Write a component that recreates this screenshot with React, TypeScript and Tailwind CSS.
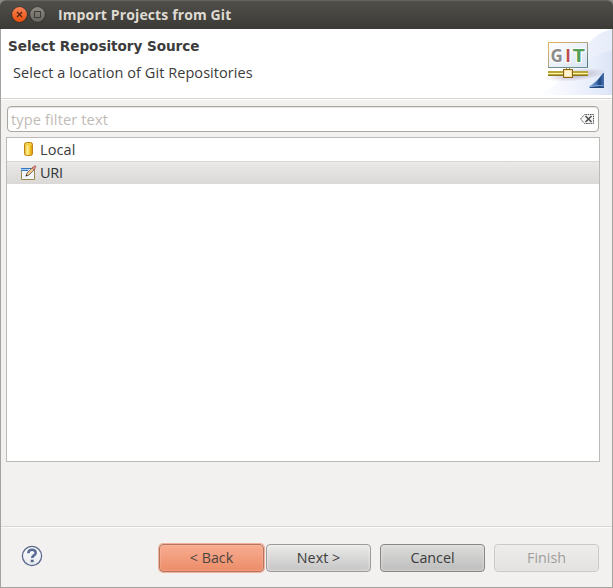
import React from "react";

function TitleBar() {
  return (
    <div className="bg-[#8b8b86]">
      <div className="flex h-[29px] items-center rounded-t-[6px] border-t border-[#66645e] bg-linear-to-b from-[#504f4a] to-[#3b3a36] pl-[11px]">
        <svg width="36" height="18" viewBox="0 0 36 18" className="shrink-0">
          <defs>
            <linearGradient id="close" x2="0" y2="1">
              <stop stopColor="#f98253" />
              <stop offset="1" stopColor="#e8500f" />
            </linearGradient>
            <linearGradient id="max" x2="0" y2="1">
              <stop stopColor="#8b8981" />
              <stop offset="1" stopColor="#66645e" />
            </linearGradient>
          </defs>
          <circle cx="8.5" cy="8.7" r="8.2" fill="#32312e" />
          <circle cx="8.5" cy="8.5" r="7.4" fill="url(#close)" />
          <path d="M6 6l5 5M11 6l-5 5" stroke="#4b2416" strokeWidth="1.2" />
          <circle cx="26.5" cy="8.7" r="8.2" fill="#32312e" />
          <circle cx="26.5" cy="8.5" r="7.4" fill="url(#max)" />
          <path d="M23.5 5.5h6v6h-6z" fill="none" stroke="#3c3b37" />
        </svg>
        <h1 className="ml-[11px] whitespace-nowrap font-['Open_Sans','Noto_Sans',sans-serif] text-[14px] leading-5 font-bold tracking-[0.12px] text-[#dfdbd2]">
          Import Projects from Git
        </h1>
      </div>
    </div>
  );
}

function GitBanner() {
  return (
    <svg width="75" height="66" viewBox="0 0 75 66" className="shrink-0 self-start">
      <defs>
        <linearGradient id="sky" x1="0" x2="1">
          <stop stopColor="#fff" />
          <stop offset=".55" stopColor="#f0f3fd" />
          <stop offset="1" stopColor="#e6ecf9" />
        </linearGradient>
        <linearGradient id="sky2" x1="0" x2="1">
          <stop offset=".1" stopColor="#fff" stopOpacity="0" />
          <stop offset="1" stopColor="#dbe4f7" />
        </linearGradient>
        <linearGradient id="frame" x1="0" x2="1" y2="1">
          <stop stopColor="#e8b15d" />
          <stop offset=".45" stopColor="#b4a882" />
          <stop offset="1" stopColor="#47707a" />
        </linearGradient>
        <linearGradient id="screen" x1="0" x2="1" y2="1">
          <stop stopColor="#fff" />
          <stop offset="1" stopColor="#d7e4f2" />
        </linearGradient>
        <linearGradient id="tri" x1="0" x2="1" y1="0" y2="0">
          <stop stopColor="#a5c6ea" />
          <stop offset=".5" stopColor="#3f6dab" />
          <stop offset=".72" stopColor="#1f4683" />
          <stop offset="1" stopColor="#4a73af" />
        </linearGradient>
        <radialGradient id="shade">
          <stop stopColor="#9d93ac" stopOpacity=".7" />
          <stop offset="1" stopColor="#9d93ac" stopOpacity="0" />
        </radialGradient>
      </defs>
      <path d="M75 0C62 3 51 12 44 24S26 55 0 66h75z" fill="url(#sky)" />
      <path d="M75 22C58 24 49 33 39 47S17 63 0 66h75z" fill="url(#sky2)" />
      <ellipse cx="39" cy="46" rx="31" ry="6" fill="url(#shade)" transform="rotate(-6 39 46)" />
      <rect x="11.5" y="13.5" width="39" height="25" fill="url(#screen)" stroke="url(#frame)" />
      <path d="M11 38.5h40" stroke="#6f8f8f" />
      <g fontFamily="Open Sans, Noto Sans, sans-serif" fontWeight="700" fontSize="17" stroke="#fff" strokeWidth="2" paintOrder="stroke">
        <text x="13.6" y="32.5" fill="#8b8b8b">G</text>
        <text x="28.2" y="32.5" fill="#b84c52">I</text>
        <text x="35.4" y="32.5" textLength="12.5" lengthAdjust="spacingAndGlyphs" fill="#54a05b">T</text>
      </g>
      <path d="M29.5 39v3M32.5 39v3" stroke="#a08726" />
      <rect x="11" y="42" width="40" height="5" fill="#b9a53a" />
      <path d="M11 44.5h40" stroke="#fff7a0" />
      <path d="M11 46.5h40" stroke="#8d7620" />
      <rect x="26.5" y="40.5" width="9" height="8" fill="#f8dda0" stroke="#8a6716" />
      <path d="M28 42h6v5h-6z" fill="#fff3d0" />
      <path d="M67 44v15H52V57C57 55 61 51 66 44z" fill="url(#tri)" />
      <path d="M58 56.5h8" stroke="#7ba3d3" />
      <path d="M53 58.5h14" stroke="#24477d" />
    </svg>
  );
}

function Header() {
  return (
    <header className="flex h-[70px] justify-between border-b border-[#d6d4d1] bg-white">
      <div className="whitespace-nowrap pl-[7px] pt-2">
        <h2 className="font-['DejaVu_Sans','Open_Sans',sans-serif] text-[13.6px] leading-[18px] font-bold tracking-[-0.05px] text-[#3c3c3c]">
          Select Repository Source
        </h2>
        <p className="mt-2 pl-[5px] text-[14.5px] leading-5 tracking-[0.06px] text-[#3c3c3c]">
          Select a location of Git Repositories
        </p>
      </div>
      <GitBanner />
    </header>
  );
}

function ClearIcon() {
  return (
    <svg width="16" height="12" viewBox="0 0 16 12">
      <path d="M1.5 6L5.5 1.5h9v9h-9z" fill="#f5f5f3" stroke="#555" strokeDasharray="1.6 .7" />
      <path d="M6.5 3l6 6M12.5 3l-6 6" stroke="#4b4b4b" strokeWidth="1.5" />
    </svg>
  );
}

function CylinderIcon() {
  return (
    <svg width="16" height="16" viewBox="0 0 16 16">
      <defs>
        <linearGradient id="gold">
          <stop stopColor="#e0a410" />
          <stop offset=".35" stopColor="#fff3a0" />
          <stop offset=".65" stopColor="#f6cb30" />
          <stop offset="1" stopColor="#d29208" />
        </linearGradient>
      </defs>
      <path d="M4.5 2.5q0-2 2-2h4q2 0 2 2v9q0 2-2 2h-4q-2 0-2-2z" fill="url(#gold)" stroke="#c18615" />
      <ellipse cx="8.5" cy="2.5" rx="3.2" ry="1.2" fill="#f5cf45" />
    </svg>
  );
}

function EditIcon() {
  return (
    <svg width="17" height="16" viewBox="0 0 17 16">
      <path d="M1.5 3.5h13v11h-13z" fill="#f2f7fd" stroke="#9b8948" />
      <path d="M1 3.5h10M1 5.5h7" stroke="#3777bd" />
      <path d="M1 4.5h8" stroke="#a5cdf2" />
      <path d="M6 11L7 8l6-6 2 2-6 6z" fill="#f4c892" stroke="#655449" strokeWidth=".8" />
      <path d="M12 3l2-2q2-1 2 1l-2 3z" fill="#df8b7e" stroke="#9e5852" strokeWidth=".6" />
      <path d="M5.5 11.5l1-2 1.2 1z" fill="#202020" />
    </svg>
  );
}

function HelpIcon() {
  return (
    <svg width="22" height="22" viewBox="0 0 22 22">
      <defs>
        <linearGradient id="help" x2="0" y2="1">
          <stop stopColor="#fff" />
          <stop offset="1" stopColor="#e4e7ec" />
        </linearGradient>
      </defs>
      <circle cx="11" cy="11" r="9.6" fill="url(#help)" stroke="#526488" strokeWidth="1.2" />
      <path d="M7.3 8.3C7.4 3.6 15 3.8 14.7 8c-.2 2.5-3.5 2.4-3.5 5" fill="none" stroke="#586c96" strokeWidth="2.6" />
      <path d="M9.8 14.7h2.8v2.5H9.8z" fill="#526488" />
    </svg>
  );
}

const buttonBase =
  "flex h-[28px] w-[105px] items-center justify-center rounded-[4px] border text-[14.3px] whitespace-nowrap";

export default function App() {
  return (
    <main className="flex h-[588px] w-[613px] flex-col overflow-hidden bg-[#f2f1f0] font-['Open_Sans','Noto_Sans',sans-serif] text-[#3c3c3c]">
      <TitleBar />
      <div className="flex min-h-0 flex-1 flex-col border-x border-b border-[#a5a39e]">
        <Header />
        <section className="flex flex-col border-t border-white px-[5px] pt-[6px]">
          <div className="mr-[8px] ml-px flex h-[26px] items-center justify-between rounded-[4px] border border-[#aaa7a2] bg-white pr-[3px] pl-[3px] shadow-[inset_0_1px_1px_#e5e3e1]">
            <span className="text-[14.6px] leading-5 tracking-[0.12px] text-[#bfbbb7]">type filter text</span>
            <ClearIcon />
          </div>
          <div className="mt-[5px] mr-[7px] h-[325px] border border-[#bdbbb8] bg-white text-[14.5px]">
            <div className="flex h-[23px] items-center pl-[13px]">
              <CylinderIcon />
              <span className="ml-[4px] tracking-[0.1px]">Local</span>
            </div>
            <div className="flex h-[23px] items-center border-t border-[#d8d7d5] bg-linear-to-b from-[#eae9e8] to-[#dad9d7] pb-px pl-[13px] text-[#2e3436]">
              <EditIcon />
              <span className="ml-[3px] tracking-[-0.3px]">URI</span>
            </div>
          </div>
        </section>
        <footer className="mt-auto flex h-[61px] items-start border-t border-[#d9d7d4] pl-[20px] pt-[17px] shadow-[inset_0_1px_0_#fafafa]">
          <div className="mt-px">
            <HelpIcon />
          </div>
          <div className="ml-[116px] flex">
            <button className={`${buttonBase} mr-[2px] border-[#b5745d] bg-linear-to-b from-[#f8ad91] to-[#eb8c68] text-[#4c443f] shadow-[0_0_0_1px_#f2b29b,inset_0_0_2px_#ffc6b2]`}>
              &lt; Back
            </button>
            <button className={`${buttonBase} border-[#9c9b99] bg-linear-to-b from-[#ebebea] to-[#c5c5c5] shadow-[inset_0_0_3px_#f3f3f3]`}>
              Next &gt;
            </button>
            <button className={`${buttonBase} ml-[9px] border-[#888785] bg-linear-to-b from-[#dddddc] to-[#bdbdbd] shadow-[inset_0_0_3px_#e8e8e8]`}>
              Cancel
            </button>
            <button disabled className={`${buttonBase} ml-[9px] border-[#cbc9c6] bg-linear-to-b from-[#eeedec] to-[#e3e2e1] text-[#a09e9c] shadow-[inset_0_0_1px_#fff]`}>
              Finish
            </button>
          </div>
        </footer>
      </div>
    </main>
  );
}
